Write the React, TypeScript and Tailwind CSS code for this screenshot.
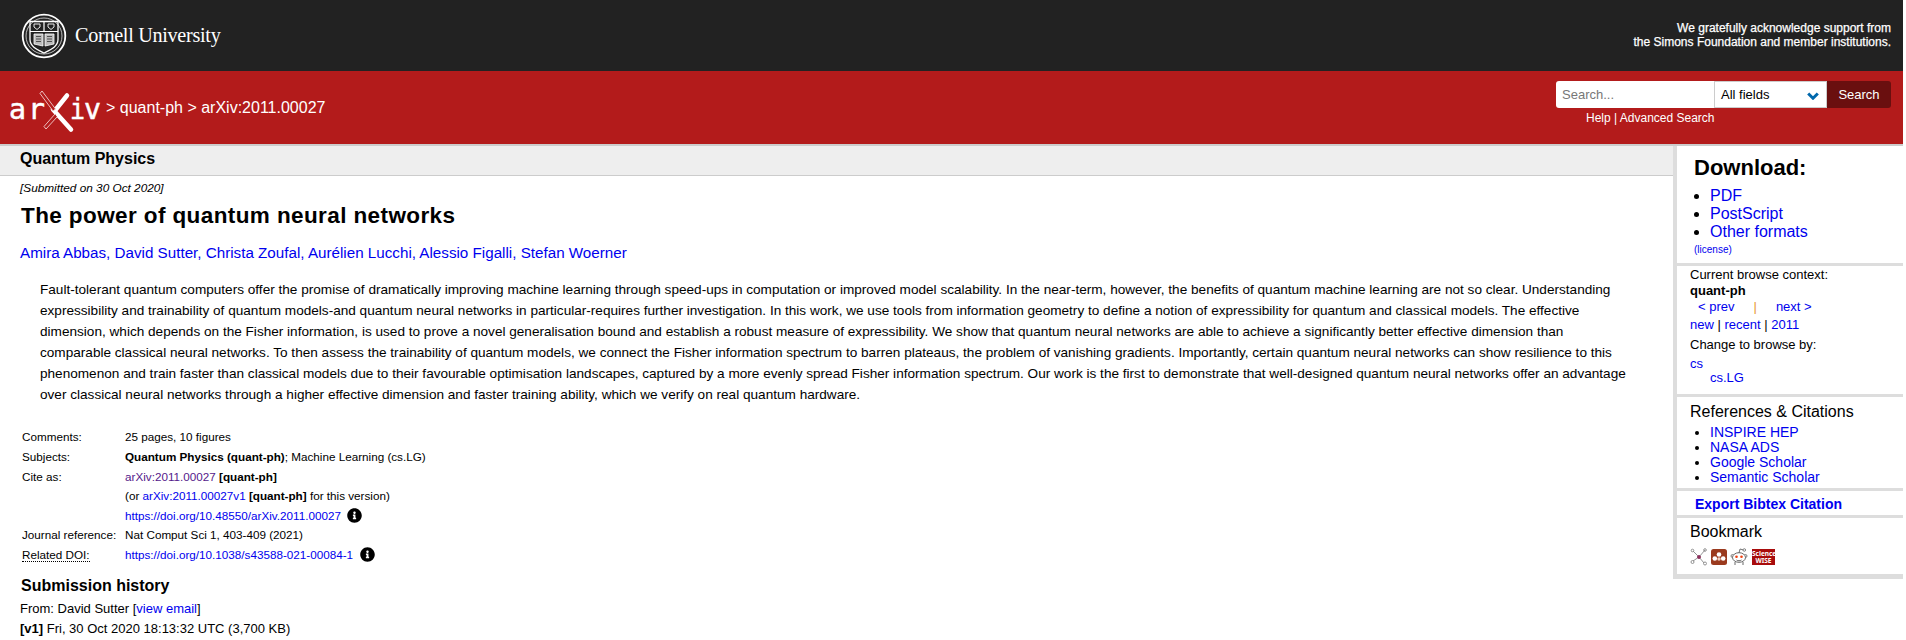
import { FaInfoCircle } from "react-icons/fa";

const ABSTRACT =
  "Fault-tolerant quantum computers offer the promise of dramatically improving machine learning through speed-ups in computation or improved model scalability. In the near-term, however, the benefits of quantum machine learning are not so clear. Understanding expressibility and trainability of quantum models-and quantum neural networks in particular-requires further investigation. In this work, we use tools from information geometry to define a notion of expressibility for quantum and classical models. The effective dimension, which depends on the Fisher information, is used to prove a novel generalisation bound and establish a robust measure of expressibility. We show that quantum neural networks are able to achieve a significantly better effective dimension than comparable classical neural networks. To then assess the trainability of quantum models, we connect the Fisher information spectrum to barren plateaus, the problem of vanishing gradients. Importantly, certain quantum neural networks can show resilience to this phenomenon and train faster than classical models due to their favourable optimisation landscapes, captured by a more evenly spread Fisher information spectrum. Our work is the first to demonstrate that well-designed quantum neural networks offer an advantage over classical neural networks through a higher effective dimension and faster training ability, which we verify on real quantum hardware.";

const AUTHORS = ["Amira Abbas", "David Sutter", "Christa Zoufal", "Aurélien Lucchi", "Alessio Figalli", "Stefan Woerner"];

const Link = ({ children, className = "" }: { children: React.ReactNode; className?: string }) => (
  <a className={`text-[#0000ee] ${className}`}>{children}</a>
);

const CornellSeal = () => (
  <svg width="46" height="46" viewBox="0 0 46 46" fill="none" stroke="#fff" className="shrink-0">
    <circle cx="23" cy="23" r="21.3" strokeWidth="1.8" />
    <circle cx="23" cy="23" r="18" strokeWidth="0.7" />
    <path d="M9 8.5h28v18c0 7-7 10-14 13.500c-7-3.500-14-6.500-14-13.500z" strokeWidth="1.3" />
    <path d="M9 18.500h28M23 8.500v10" strokeWidth="1.2" />
    <path d="M13 11h6v3l-3 2.500-3-2.500zM27 11h6v3l-3 2.500-3-2.500z" strokeWidth="0.9" />
    <path d="M13 21h9v12l-9-2zM33 21h-9v12l9-2z" fill="#bbb" stroke="#fff" strokeWidth="0.8" />
    <path d="M15 23.500h5M15 26h5M15 28.500h5M26 23.500h5M26 26h5M26 28.500h5" stroke="#222" strokeWidth="0.7" />
  </svg>
);

const LOGO_FONT = "'DejaVu Sans Mono', monospace";

const ArxivLogo = () => (
  <svg width="97" height="50" viewBox="0 0 97 50" className="shrink-0" fill="#fff" fontFamily={LOGO_FONT} fontSize="28" stroke="#fff" strokeWidth="0.5">
    <text x="0" y="35.500" textLength="17" lengthAdjust="spacingAndGlyphs">a</text>
    <text x="19" y="35.500" textLength="17" lengthAdjust="spacingAndGlyphs">r</text>
    <text x="61" y="35.500" textLength="15" lengthAdjust="spacingAndGlyphs">i</text>
    <text x="75" y="35.500" textLength="17" lengthAdjust="spacingAndGlyphs">v</text>
    <path d="M58 12.500L46 27.500" stroke="#fff" strokeWidth="4.500" strokeLinecap="round" fill="none" />
    <path d="M44 26.500L62 46.500" stroke="#fff" strokeWidth="4.500" strokeLinecap="round" fill="none" />
    <path d="M33 8l-2 2.500L44 28l2.500-2zM46 31L35 43.500l2 2.500L48 34" stroke="#f3d0d0" strokeWidth="0.9" fill="#b31b1b" />
  </svg>
);

const Chevron = () => (
  <svg width="12" height="8" viewBox="0 0 12 8" className="absolute right-[7px] top-[10px]">
    <path d="M1.200 1.500L6 6.200l4.800-4.700" fill="none" stroke="#0068ac" strokeWidth="3" />
  </svg>
);

const InfoIcon = ({ className = "" }: { className?: string }) => (
  <FaInfoCircle className={`inline-block text-[15px] text-black align-[-3px] ${className}`} />
);

const BookmarkIcons = () => (
  <div className="flex items-center h-[18px] mt-[6px]">
    <svg width="18" height="18" viewBox="0 0 18 18" fill="none" stroke="#888" strokeWidth="0.9">
      <path d="M9 9L3 3M9 9l6-7M9 9L3 13M9 9l5 6" />
      <circle cx="2.500" cy="2.500" r="1.300" />
      <circle cx="15" cy="2" r="1.300" />
      <circle cx="2.500" cy="14" r="1.500" />
      <circle cx="15" cy="15.500" r="1.500" />
      <circle cx="9" cy="9" r="1.500" fill="#8c2f5c" stroke="#8c2f5c" />
    </svg>
    <svg width="16" height="16" viewBox="0 0 16 16" className="ml-[3px]">
      <rect width="16" height="16" rx="2.500" fill="#9a3a1e" />
      <circle cx="8" cy="5.500" r="2.300" fill="#fff" />
      <circle cx="3.800" cy="9.500" r="2.300" fill="#fff" />
      <circle cx="12.200" cy="9.500" r="2.300" fill="#fff" />
      <circle cx="8" cy="10" r="1.700" fill="#f0d0c0" />
    </svg>
    <svg width="18" height="18" viewBox="0 0 18 18" className="ml-[3px]">
      <path d="M9 5l1-4 3.500 1" fill="none" stroke="#666" strokeWidth="0.9" />
      <circle cx="14.300" cy="2" r="1.300" fill="#fff" stroke="#666" strokeWidth="0.8" />
      <circle cx="2.500" cy="8" r="1.500" fill="#fff" stroke="#666" strokeWidth="0.8" />
      <circle cx="15.500" cy="8" r="1.500" fill="#fff" stroke="#666" strokeWidth="0.8" />
      <ellipse cx="9" cy="9.500" rx="6.500" ry="4.800" fill="#fff" stroke="#555" strokeWidth="0.9" />
      <circle cx="6.500" cy="8.800" r="1.300" fill="#f04010" />
      <circle cx="11.500" cy="8.800" r="1.300" fill="#f04010" />
      <path d="M6.500 12c1.500 1 3.500 1 5 0M5 14v3M13 14v3" fill="none" stroke="#555" strokeWidth="0.9" />
    </svg>
    <div className="ml-[4px] w-[23px] h-[16px] bg-[#a80c0c] text-white text-[6.500px] leading-[7.500px] font-bold text-center pt-[0.500px] [font-family:'Noto_Sans',sans-serif]">
      Science
      <br />
      WISE
    </div>
  </div>
);

const Row = ({ label, children, dotted }: { label: string; children: React.ReactNode; dotted?: boolean }) => (
  <div className="flex h-[19.600px] items-center">
    <div className="w-[103px] shrink-0">
      <span className={dotted ? "border-b border-dotted border-black" : ""}>{label}</span>
    </div>
    <div>{children}</div>
  </div>
);

const Bullets = ({ items, className }: { items: string[]; className: string }) => (
  <ul className={`list-disc ${className}`}>
    {items.map((t) => (
      <li key={t}>
        <Link>{t}</Link>
      </li>
    ))}
  </ul>
);

export default function App() {
  return (
    <div className="w-[1906px] h-[640px] overflow-hidden bg-white text-black [font-family:'Liberation_Sans',Arial,sans-serif]">
      <div className="w-[1903px]">
        <div className="h-[71px] bg-[#222222] flex items-center justify-between pl-[21px] pr-[12px]">
          <div className="flex items-center gap-[8px]">
            <CornellSeal />
            <span className="text-white text-[20.200px] tracking-[-0.300px] [font-family:'Liberation_Serif',serif]">Cornell University</span>
          </div>
          <div className="text-white text-[12px] leading-[14px] text-right pb-[1px] [-webkit-text-stroke:0.25px_#fff]">
            We gratefully acknowledge support from
            <br />
            the Simons Foundation and member institutions.
          </div>
        </div>

        <div className="h-[73px] bg-[#b31b1b] flex justify-between pl-[9px] pr-[12px]">
          <div className="flex items-center text-white text-[16px]">
            <ArxivLogo />
            <span>&gt; quant-ph &gt; arXiv:2011.00027</span>
          </div>
          <div className="pt-[10px]">
            <div className="flex h-[27px] text-[13px]">
              <div className="w-[158px] bg-white rounded-l-[3px] pl-[6px] text-[#777] leading-[27px]">Search...</div>
              <div className="relative w-[113px] bg-white border border-[#ccc] pl-[6px] leading-[25px]">
                All fields
                <Chevron />
              </div>
              <div className="w-[64px] bg-[#6a0f0f] text-white rounded-r-[3px] text-center leading-[28px]">Search</div>
            </div>
            <div className="text-white text-[12px] leading-[14px] mt-[3px] pl-[30px]">Help | Advanced Search</div>
          </div>
        </div>

        <div className="flex border-t-2 border-[#cccccc] h-[496px]">
          <div className="w-[1673px] shrink-0">
            <div className="h-[30px] bg-[#eeeeee] border-b border-[#cccccc] pl-[20px] font-bold text-[16px] leading-[25px]">Quantum Physics</div>
            <div className="pl-[20px] pt-[5px]">
              <div className="italic text-[11.800px] leading-[14px]">[Submitted on 30 Oct 2020]</div>
              <h1 className="font-bold text-[22.500px] leading-[28px] tracking-[0.400px] mt-[7px] pl-[1px]">The power of quantum neural networks</h1>
              <div className="text-[15.200px] leading-[20px] mt-[13px]">
                {AUTHORS.map((a, i) => (
                  <span key={a}>
                    <Link>{a}</Link>
                    {i < AUTHORS.length - 1 && <span className="text-[#0000ee]">, </span>}
                  </span>
                ))}
              </div>
            </div>
            <p className="text-[13.600px] leading-[20.900px] ml-[40px] mr-[40px] mt-[17px]">{ABSTRACT}</p>
            <div className="text-[11.700px] ml-[22px] mt-[22px]">
              <Row label="Comments:">25 pages, 10 figures</Row>
              <Row label="Subjects:">
                <span className="font-bold">Quantum Physics (quant-ph)</span>; Machine Learning (cs.LG)
              </Row>
              <Row label="Cite as:">
                <a className="text-[#551a8b]">arXiv:2011.00027</a> <span className="font-bold">[quant-ph]</span>
              </Row>
              <Row label="">
                (or <Link>arXiv:2011.00027v1</Link> <span className="font-bold">[quant-ph]</span> for this version)
              </Row>
              <Row label="">
                <Link>https://doi.org/10.48550/arXiv.2011.00027</Link>
                <InfoIcon className="ml-[6px]" />
              </Row>
              <Row label="Journal reference:">Nat Comput Sci 1, 403-409 (2021)</Row>
              <Row label="Related DOI:" dotted>
                <Link>https://doi.org/10.1038/s43588-021-00084-1</Link>
                <InfoIcon className="ml-[7px]" />
              </Row>
            </div>
            <div className="pl-[21px] font-bold text-[16px] leading-[20px] mt-[11px]">Submission history</div>
            <div className="pl-[20px] text-[13px] leading-[20px] mt-[3px]">
              From: David Sutter [<Link>view email</Link>]
              <br />
              <span className="font-bold">[v1]</span> Fri, 30 Oct 2020 18:13:32 UTC (3,700 KB)
            </div>
          </div>

          <div className="w-[230px] h-[433px] bg-[#dddddd] pl-[4px] pb-[5px] flex flex-col gap-[3px]">
            <div className="h-[117px] bg-white pl-[17px] pt-[8px]">
              <div className="font-bold text-[22px] leading-[28px]">Download:</div>
              <Bullets items={["PDF", "PostScript", "Other formats"]} className="text-[16px] leading-[18px] pl-[16px] mt-[5px]" />
              <div className="text-[10px] leading-[12px] mt-[3px]">
                <Link>(license)</Link>
              </div>
            </div>
            <div className="h-[128px] bg-white pl-[13px] pt-[1px] text-[13px]">
              <div className="leading-[15px]">Current browse context:</div>
              <div className="font-bold leading-[15px] mt-[1px]">quant-ph</div>
              <div className="leading-[18px] pl-[8px]">
                <Link>&lt; prev</Link>
                <span className="text-[#e8962e] mx-[19px]">|</span>
                <Link>next &gt;</Link>
              </div>
              <div className="leading-[17px]">
                <Link>new</Link> | <Link>recent</Link> | <Link>2011</Link>
              </div>
              <div className="leading-[15px] mt-[4px]">Change to browse by:</div>
              <div className="leading-[15px] mt-[4px]">
                <Link>cs</Link>
              </div>
              <div className="leading-[14px] pl-[20px]">
                <Link>cs.LG</Link>
              </div>
            </div>
            <div className="h-[91px] bg-white pl-[13px] pt-[5px]">
              <div className="text-[16px] leading-[20px]">References &amp; Citations</div>
              <Bullets items={["INSPIRE HEP", "NASA ADS", "Google Scholar", "Semantic Scholar"]} className="text-[14px] leading-[15px] pl-[20px] mt-[3px]" />
            </div>
            <div className="h-[24px] bg-white pl-[18px] font-bold text-[14px] leading-[26px]">
              <Link>Export Bibtex Citation</Link>
            </div>
            <div className="h-[56px] bg-white pl-[13px] pt-[4px]">
              <div className="text-[16px] leading-[20px]">Bookmark</div>
              <BookmarkIcons />
            </div>
          </div>
        </div>
      </div>
    </div>
  );
}
